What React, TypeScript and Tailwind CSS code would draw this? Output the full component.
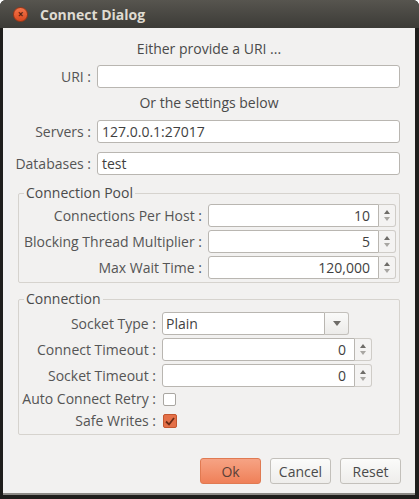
import React from 'react';

const font = { fontFamily: '"Open Sans", "DejaVu Sans", sans-serif' };

function TextField({ value, width }: { value?: string; width: string }) {
    return (
        <div className={`${width} h-[23px] rounded-[3px] border border-[#b9b6b1] bg-white px-[4px] flex items-center text-[14px] text-[#3f3f3f]`}>
            {value}
        </div>
    );
}

function SpinBox({ value, width }: { value: string; width: string }) {
    return (
        <div className={`${width} h-[23px] flex`}>
            <div className="flex-1 rounded-l-[3px] border border-[#b9b6b1] bg-white pr-[8px] flex items-center justify-end text-[14px] text-[#3f3f3f]">
                {value}
            </div>
            <div className="w-[17px] rounded-r-[3px] border border-l-0 border-[#cfccc7] bg-[#f4f3f2] flex flex-col items-center justify-center gap-[3px]">
                <div className="w-0 h-0 border-l-[3px] border-r-[3px] border-b-[4px] border-l-transparent border-r-transparent border-b-[#6e6c68]" />
                <div className="w-0 h-0 border-l-[3px] border-r-[3px] border-t-[4px] border-l-transparent border-r-transparent border-t-[#a8a6a2]" />
            </div>
        </div>
    );
}

function Row({ label, labelW, children, mt }: { label: string; labelW: string; children: React.ReactNode; mt: string }) {
    return (
        <div className={`flex items-center ${mt}`}>
            <div className={`${labelW} text-right text-[14px] text-[#555] leading-none whitespace-nowrap`}>{label}</div>
            <div className="ml-[6px]">{children}</div>
        </div>
    );
}

function Group({ title, children, className }: { title: string; children: React.ReactNode; className: string }) {
    return (
        <div className={`relative mx-[15px] w-[382px] border border-[#d6d3ce] rounded-[2px] ${className}`}>
            <span className="absolute -top-[10px] left-[5px] bg-[#f2f1f0] px-[2px] text-[14px] leading-[18px] text-[#4a4a4a]">{title}</span>
            {children}
        </div>
    );
}

function Button({ label, primary }: { label: string; primary?: boolean }) {
    return (
        <div
            className={`w-[61px] h-[26px] rounded-[3px] border flex items-center justify-center text-[14px] ${
                primary
                    ? 'border-[#e07a52] bg-gradient-to-b from-[#f6a384] to-[#ef8058] text-[#5a4038]'
                    : 'border-[#c3c0bb] bg-gradient-to-b from-[#fbfbfa] to-[#eeedeb] text-[#4a4a4a]'
            }`}
        >
            {label}
        </div>
    );
}

export default function App() {
    return (
        <div className="w-[419px] h-[499px] bg-white" style={font}>
            <div className="w-[419px] h-[499px] rounded-t-[6px] bg-[#1f1e1c] flex flex-col">
                {/* Title bar */}
                <div className="h-[28px] rounded-t-[6px] bg-gradient-to-b from-[#57554f] to-[#3c3b37] flex items-center pl-[13px]">
                    <div className="w-[15px] h-[15px] rounded-full bg-gradient-to-b from-[#f4744a] to-[#d9491f] border border-[#9c3616] flex items-center justify-center text-[10px] leading-none text-[#5a1e0c] font-bold">
                        ×
                    </div>
                    <span className="ml-[12px] text-[14px] font-bold text-[#dfdbd2]">Connect Dialog</span>
                </div>

                {/* Body */}
                <div className="ml-[3px] w-[412px] h-[467px] bg-[#f2f1f0] border-b-[2px] border-[#8c8a86] flex flex-col">
                    <div className="mt-[12px] text-center text-[14px] leading-[18px] text-[#4a4a4a]">Either provide a URI ...</div>
                    <Row label="URI :" labelW="w-[88px]" mt="mt-[7px]">
                        <TextField width="w-[303px]" />
                    </Row>
                    <div className="mt-[6px] text-center text-[14px] leading-[18px] text-[#4a4a4a]">Or the settings below</div>
                    <Row label="Servers :" labelW="w-[88px]" mt="mt-[8px]">
                        <TextField width="w-[303px]" value="127.0.0.1:27017" />
                    </Row>
                    <Row label="Databases :" labelW="w-[88px]" mt="mt-[9px]">
                        <TextField width="w-[303px]" value="test" />
                    </Row>

                    <Group title="Connection Pool" className="mt-[18px] h-[90px] pt-[10px]">
                        <Row label="Connections Per Host :" labelW="w-[183px]" mt="mt-0">
                            <SpinBox width="w-[188px]" value="10" />
                        </Row>
                        <Row label="Blocking Thread Multiplier :" labelW="w-[183px]" mt="mt-[3px]">
                            <SpinBox width="w-[188px]" value="5" />
                        </Row>
                        <Row label="Max Wait Time :" labelW="w-[183px]" mt="mt-[3px]">
                            <SpinBox width="w-[188px]" value="120,000" />
                        </Row>
                    </Group>

                    <Group title="Connection" className="mt-[16px] h-[136px] pt-[12px]">
                        <Row label="Socket Type :" labelW="w-[137px]" mt="mt-0">
                            <div className="w-[187px] h-[23px] flex">
                                <div className="flex-1 rounded-l-[3px] border border-[#b9b6b1] bg-white px-[3px] flex items-center text-[14px] text-[#3f3f3f]">Plain</div>
                                <div className="w-[24px] rounded-r-[3px] border border-l-0 border-[#c3c0bb] bg-gradient-to-b from-[#fafaf9] to-[#ecebe9] flex items-center justify-center">
                                    <div className="w-0 h-0 border-l-[4px] border-r-[4px] border-t-[5px] border-l-transparent border-r-transparent border-t-[#6e6c68]" />
                                </div>
                            </div>
                        </Row>
                        <Row label="Connect Timeout :" labelW="w-[137px]" mt="mt-[3px]">
                            <SpinBox width="w-[210px]" value="0" />
                        </Row>
                        <Row label="Socket Timeout :" labelW="w-[137px]" mt="mt-[3px]">
                            <SpinBox width="w-[210px]" value="0" />
                        </Row>
                        <Row label="Auto Connect Retry :" labelW="w-[137px]" mt="mt-[5px]">
                            <div className="ml-[1px] w-[13px] h-[13px] rounded-[2px] border border-[#a9a6a1] bg-white" />
                        </Row>
                        <Row label="Safe Writes :" labelW="w-[137px]" mt="mt-[8px]">
                            <div className="ml-[1px] w-[14px] h-[14px] rounded-[2px] border border-[#c4562f] bg-[#e47048] flex items-center justify-center">
                                <svg width="10" height="9" viewBox="0 0 10 9">
                                    <path d="M1 4.5 L4 7.5 L9 1" fill="none" stroke="#6b2a14" strokeWidth="1.8" />
                                </svg>
                            </div>
                        </Row>
                    </Group>

                    <div className="mt-[23px] mr-[14px] flex justify-end gap-[9px]">
                        <Button label="Ok" primary />
                        <Button label="Cancel" />
                        <Button label="Reset" />
                    </div>
                </div>
            </div>
        </div>
    );
}
